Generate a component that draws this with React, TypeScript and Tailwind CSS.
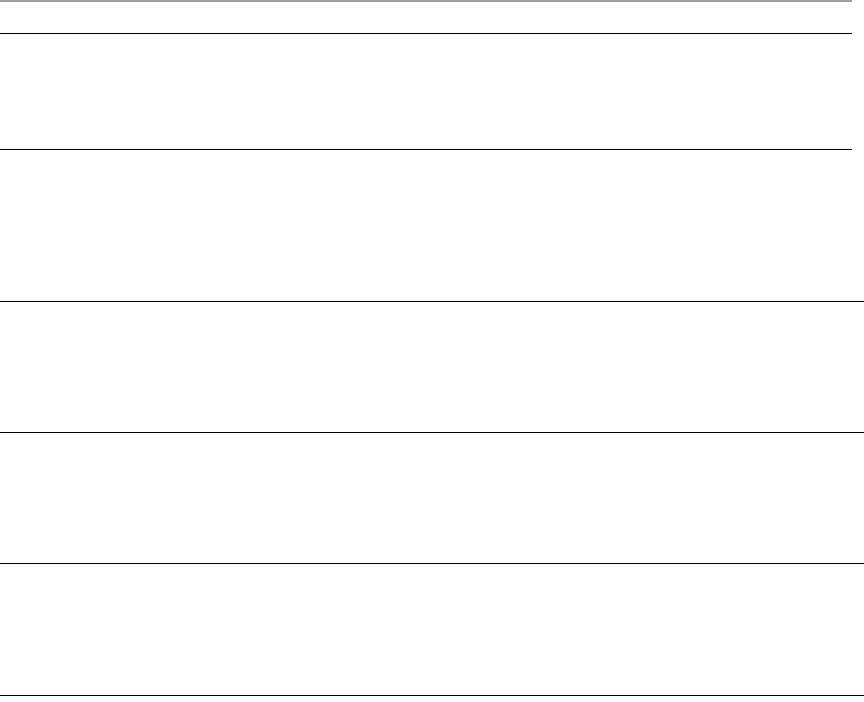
export default function App() {
  return (
    <div className="w-[864px] h-[702px] bg-white flex flex-col">
      <div className="w-[852px] h-[2px] bg-[#a0a0a0]" />
      <div className="w-[852px] h-[32px] border-b border-black" />
      <div className="w-[852px] h-[116px] border-b border-black" />
      <div className="w-full h-[152px] border-b border-black" />
      <div className="w-full h-[131px] border-b border-black" />
      <div className="w-full h-[131px] border-b border-black" />
      <div className="w-full h-[132px] border-b border-black" />
    </div>
  );
}
